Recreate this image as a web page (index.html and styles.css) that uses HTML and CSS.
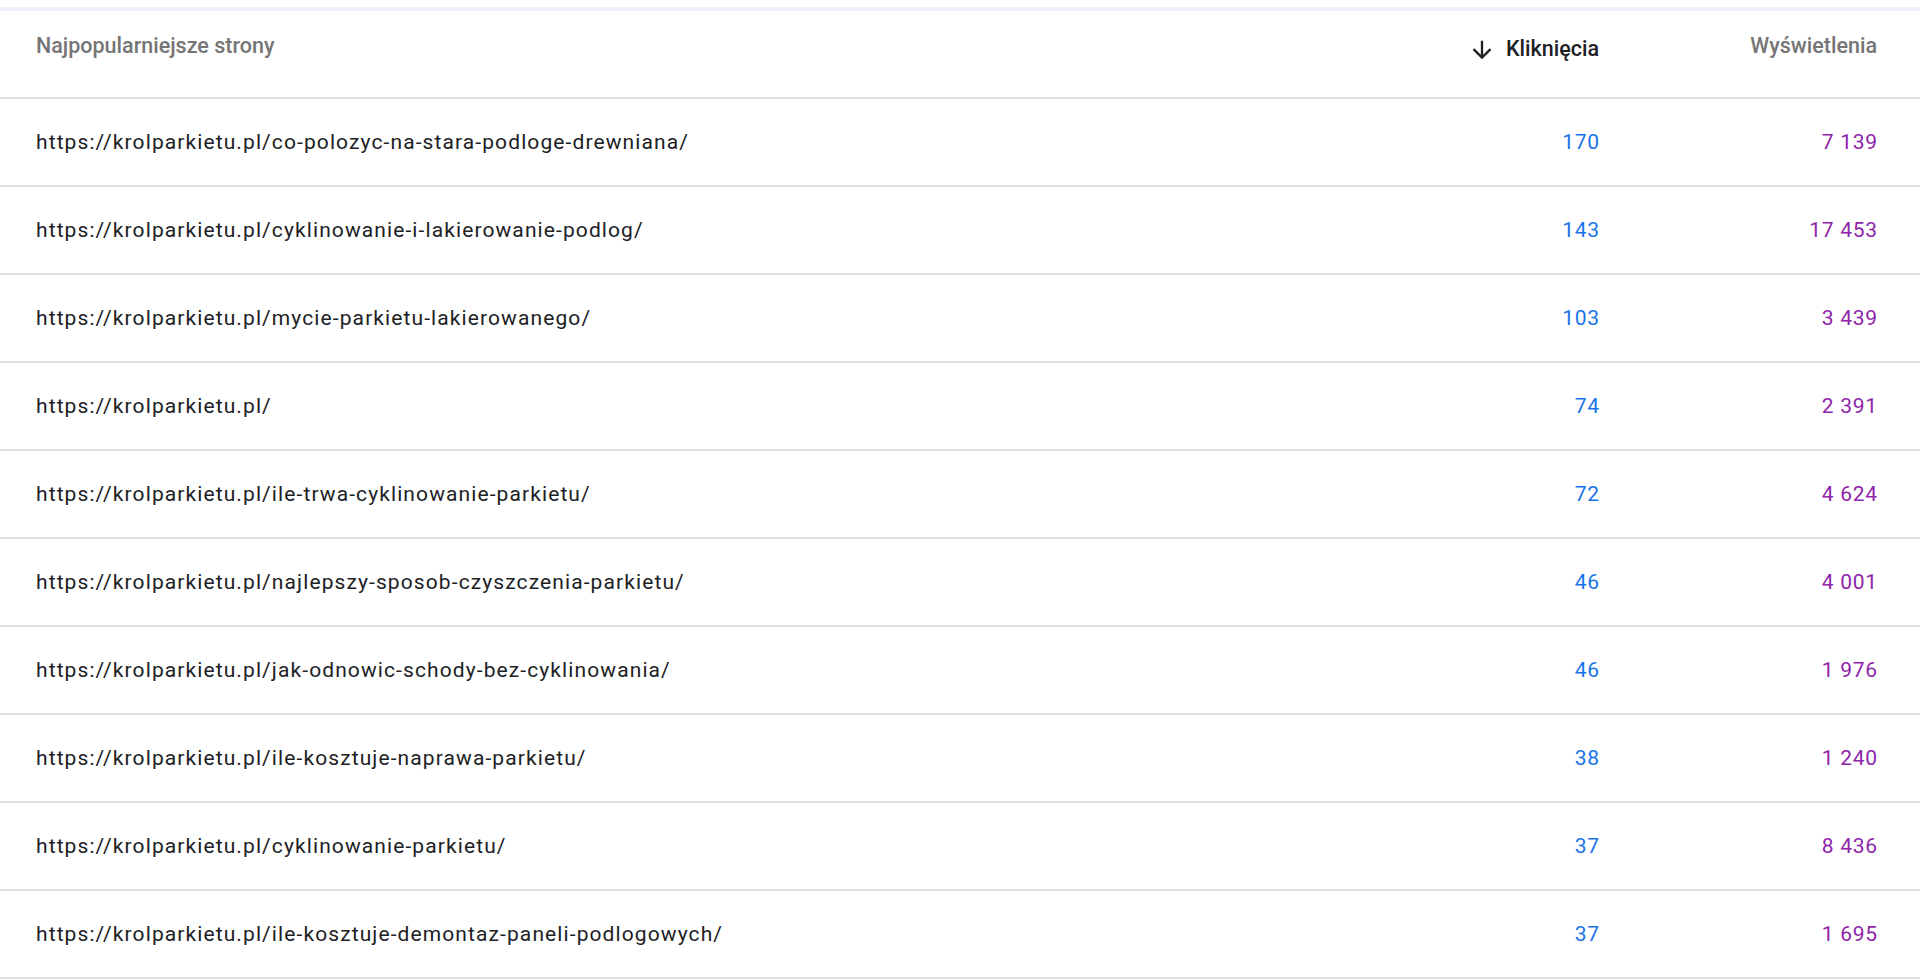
FILE: index.html
```html
<!DOCTYPE html>
<html lang="pl">
<head>
<meta charset="utf-8">
<title>Najpopularniejsze strony</title>
<link rel="stylesheet" href="styles.css">
</head>
<body>
<div class="band"></div>
<div class="table">
  <div class="row head">
    <div class="cell url">Najpopularniejsze strony</div>
    <div class="cell clicks sorted">
      <svg class="arrow" viewBox="0 0 24 24" width="28" height="28"><path d="M20 12l-1.41-1.41L13 16.17V4h-2v12.17l-5.58-5.59L4 12l8 8 8-8z" fill="currentColor"/></svg>
      <span>Kliknięcia</span>
    </div>
    <div class="cell views">Wyświetlenia</div>
  </div>
  <div class="row"><div class="cell url">https://krolparkietu.pl/co-polozyc-na-stara-podloge-drewniana/</div><div class="cell clicks"><span>170</span></div><div class="cell views"><span>7 139</span></div></div>
  <div class="row"><div class="cell url">https://krolparkietu.pl/cyklinowanie-i-lakierowanie-podlog/</div><div class="cell clicks"><span>143</span></div><div class="cell views"><span>17 453</span></div></div>
  <div class="row"><div class="cell url">https://krolparkietu.pl/mycie-parkietu-lakierowanego/</div><div class="cell clicks"><span>103</span></div><div class="cell views"><span>3 439</span></div></div>
  <div class="row"><div class="cell url">https://krolparkietu.pl/</div><div class="cell clicks"><span>74</span></div><div class="cell views"><span>2 391</span></div></div>
  <div class="row"><div class="cell url">https://krolparkietu.pl/ile-trwa-cyklinowanie-parkietu/</div><div class="cell clicks"><span>72</span></div><div class="cell views"><span>4 624</span></div></div>
  <div class="row"><div class="cell url">https://krolparkietu.pl/najlepszy-sposob-czyszczenia-parkietu/</div><div class="cell clicks"><span>46</span></div><div class="cell views"><span>4 001</span></div></div>
  <div class="row"><div class="cell url">https://krolparkietu.pl/jak-odnowic-schody-bez-cyklinowania/</div><div class="cell clicks"><span>46</span></div><div class="cell views"><span>1 976</span></div></div>
  <div class="row"><div class="cell url">https://krolparkietu.pl/ile-kosztuje-naprawa-parkietu/</div><div class="cell clicks"><span>38</span></div><div class="cell views"><span>1 240</span></div></div>
  <div class="row"><div class="cell url">https://krolparkietu.pl/cyklinowanie-parkietu/</div><div class="cell clicks"><span>37</span></div><div class="cell views"><span>8 436</span></div></div>
  <div class="row"><div class="cell url">https://krolparkietu.pl/ile-kosztuje-demontaz-paneli-podlogowych/</div><div class="cell clicks"><span>37</span></div><div class="cell views"><span>1 695</span></div></div>
</div>
</body>
</html>
```
FILE: styles.css
```css
html, body {
  margin: 0;
  padding: 0;
  background: #ffffff;
  overflow: hidden;
}
body {
  font-family: Roboto, "Liberation Sans", Arial, sans-serif;
  color: #202124;
}
.band {
  height: 4px;
  margin-top: 7px;
  background: #eef0f9;
}
.table {
  display: flex;
  flex-direction: column;
}
.row {
  display: flex;
  align-items: center;
  height: 86px;
  border-bottom: 2px solid #e0e0e0;
  padding: 0 43px 0 36px;
  font-size: 21px;
  line-height: 24px;
}
.row.head {
  align-items: flex-start;
  padding-top: 23px;
  height: 63px;
  font-size: 21.5px;
  font-weight: 500;
  color: #757575;
}
.cell.url {
  flex: 1;
  white-space: nowrap;
  letter-spacing: 1.1px;
}
.head .cell.url {
  letter-spacing: 0;
}
.cell.clicks {
  width: 200px;
  text-align: right;
  color: #1a73e8;
}
.cell.views {
  width: 278px;
  text-align: right;
  color: #8e24aa;
}
.cell.clicks span,
.cell.views span {
  letter-spacing: 0.7px;
  margin-right: -0.7px;
}
.head .cell.clicks span {
  letter-spacing: 0;
  margin-right: 0;
}
.head .cell.clicks,
.head .cell.views {
  color: #757575;
}
.head .cell.clicks.sorted {
  display: flex;
  justify-content: flex-end;
  align-items: center;
  gap: 10px;
  color: #202124;
}
.arrow {
  display: block;
  margin-top: 2px;
}
```
